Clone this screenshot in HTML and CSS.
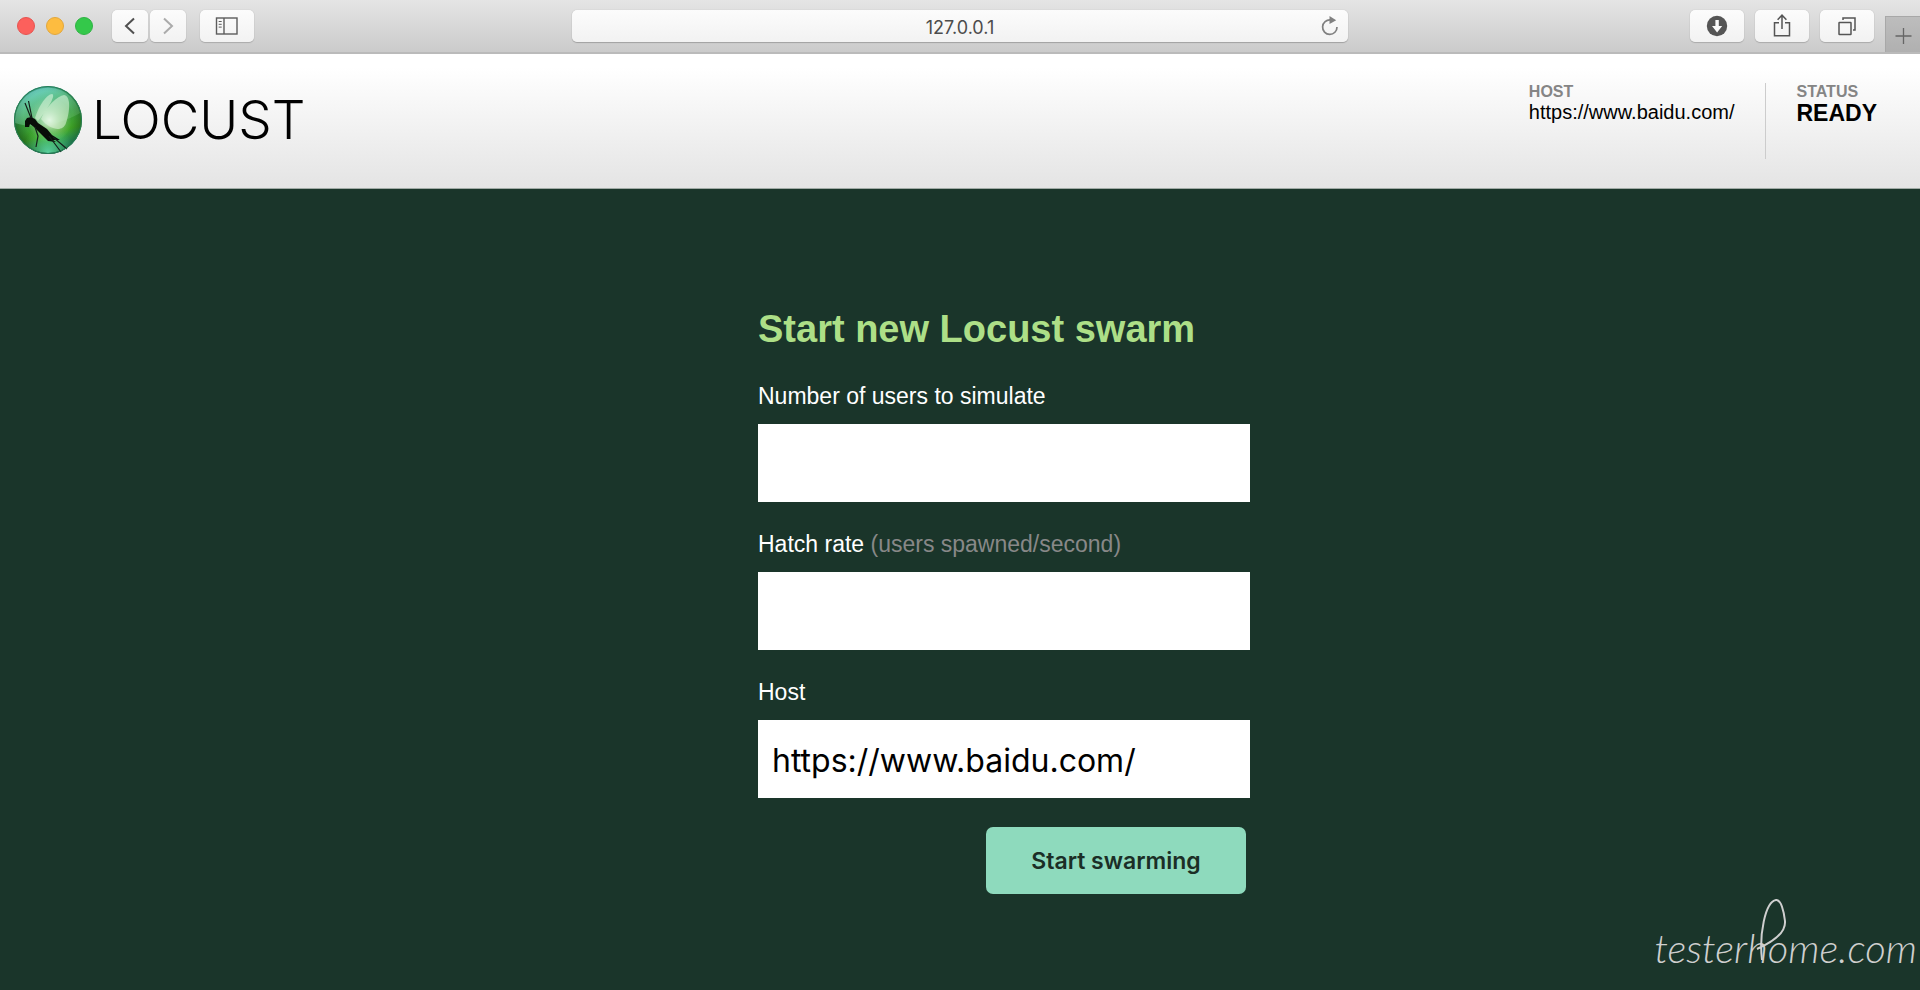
FILE: index.html
```html
<!DOCTYPE html>
<html lang="en">
<head>
<meta charset="utf-8">
<title>Locust</title>
<link rel="stylesheet" href="styles.css">
</head>
<body>
<div class="toolbar">
  <div class="tools-left">
    <div class="lights">
      <button class="light red" aria-label="Close"></button>
      <button class="light amber" aria-label="Minimise"></button>
      <button class="light green" aria-label="Full screen"></button>
    </div>
    <div class="history">
      <button class="tool narrow" aria-label="Back"><svg width="36" height="32" viewBox="0 0 36 32"><path d="M22 8.500 14 16l8 7.500" fill="none" stroke="#505050" stroke-width="2"/></svg></button>
      <button class="tool narrow" aria-label="Forward"><svg width="36" height="32" viewBox="0 0 36 32"><path d="M14 8.500 22 16l-8 7.500" fill="none" stroke="#ababab" stroke-width="2"/></svg></button>
    </div>
    <button class="tool" aria-label="Sidebar"><svg width="54" height="32" viewBox="0 0 54 32" fill="none" stroke="#5c5c5c"><rect x="16.500" y="8" width="20.500" height="16" stroke-width="1.400"/><path d="M24 8v16" stroke-width="1.400"/><path d="M18.700 11.500h3M18.700 14.300h3M18.700 17.100h3" stroke-width="1"/></svg></button>
  </div>
  <div class="address">
    <input class="url" type="text" value="127.0.0.1" aria-label="Address">
    <button class="reload" aria-label="Reload"><svg width="20" height="22" viewBox="0 0 20 22"><path d="M10.500 4A7.200 7.200 0 1 0 17 11" fill="none" stroke="#808080" stroke-width="1.700"/><path d="M9.500 0v8L16.200 4.200z" fill="#808080"/></svg></button>
  </div>
  <div class="tools-right">
    <button class="tool" aria-label="Downloads"><svg width="54" height="32" viewBox="0 0 54 32"><circle cx="27" cy="16" r="10.200" fill="#555"/><path d="M25.400 10h3.400v6h3.400l-5.100 6.500-5.100-6.500h3.400z" fill="#fafafa"/></svg></button>
    <button class="tool" aria-label="Share"><svg width="54" height="32" viewBox="0 0 54 32" fill="none" stroke="#555" stroke-width="1.500"><path d="M24 12.700h-4.500v13h15v-13H30M27 19V5.500M22.600 9.800 27 5.200l4.400 4.600"/></svg></button>
    <button class="tool" aria-label="Tabs"><svg width="54" height="32" viewBox="0 0 54 32" fill="none" stroke="#555" stroke-width="1.500"><rect x="19" y="12.500" width="12" height="12" rx=".5"/><path d="M23 10V8h12v12h-2"/></svg></button>
    <button class="new-tab" aria-label="New tab"><svg width="34" height="35" viewBox="0 0 34 35"><path d="M17.500 11v16M9.500 19h16" stroke="#666" stroke-width="1.300"/></svg></button>
  </div>
</div>

<header class="header">
  <a class="brand" href="#">
    <svg class="emblem" width="70" height="70" viewBox="0 0 70 70" aria-hidden="true">
      <defs>
        <linearGradient id="ball" x1="0" y1="0" x2=".3" y2="1"><stop offset="0" stop-color="#55c6d4"/><stop offset=".3" stop-color="#45b071"/><stop offset=".55" stop-color="#35973c"/><stop offset=".8" stop-color="#3fa325"/><stop offset="1" stop-color="#30a877"/></linearGradient>
        <radialGradient id="shade" cx=".5" cy=".44" r=".56"><stop offset=".65" stop-color="#042b10" stop-opacity="0"/><stop offset=".95" stop-color="#042b10" stop-opacity=".45"/><stop offset="1" stop-color="#03200c" stop-opacity=".7"/></radialGradient>
        <radialGradient id="glow" cx=".52" cy=".5" r=".34"><stop offset="0" stop-color="#fff" stop-opacity=".95"/><stop offset=".45" stop-color="#d4f0cd" stop-opacity=".5"/><stop offset="1" stop-color="#b8e5ae" stop-opacity="0"/></radialGradient>
        <linearGradient id="gloss" x1="0" y1="0" x2="1" y2="1"><stop offset="0" stop-color="#8ae8ee" stop-opacity=".5"/><stop offset="1" stop-color="#a4e3a2" stop-opacity=".12"/></linearGradient>
        <radialGradient id="base" cx=".5" cy="1" r=".4"><stop offset="0" stop-color="#67e3af" stop-opacity=".85"/><stop offset="1" stop-color="#59cf71" stop-opacity="0"/></radialGradient>
      </defs>
      <circle cx="35" cy="35" r="34" fill="url(#ball)"/>
      <circle cx="35" cy="35" r="34" fill="url(#shade)"/>
      <circle cx="35" cy="35" r="33" fill="url(#glow)"/>
      <circle cx="35" cy="35" r="33" fill="url(#base)"/>
      <path d="M2 38A33 33 0 0 1 67 28C54 36 25 46 2 38z" fill="url(#gloss)"/>
      <path d="M22 33C26 20 34 9 39 9c4 1-3 13-14 27z" fill="#e4f7e0" fill-opacity=".55"/>
      <path d="M28 34C33 21 45 11 51 10c6 0 7 14 2 28-3 9-15 8-25-4z" fill="#e4f7e0" fill-opacity=".55"/>
      <path d="M12 42v-6l2-3 4-1 4 2 3 4 9 6 5 6 8 5-7 0 3 2-8-1-8-8-6-6-4-3-1 3z" fill="#080d08"/>
      <path d="M18 33 12 18M19 33 15.500 16M22 42l3 9-2 11M36 51l12 16M40 52l14 12" fill="none" stroke="#141f1a" stroke-width="1.200"/>
      <circle cx="35" cy="35" r="33.500" fill="none" stroke="#277d58" stroke-width="1"/>
    </svg>
    <span class="wordmark">LOCUST</span>
  </a>
  <dl class="stats">
    <div class="stat"><dt>HOST</dt><dd>https://www.baidu.com/</dd></div>
    <div class="stat status"><dt>STATUS</dt><dd>READY</dd></div>
  </dl>
</header>

<main class="main">
  <form class="swarm">
    <h1>Start new Locust swarm</h1>
    <label for="users">Number of users to simulate</label>
    <input class="field" id="users" type="text">
    <label for="rate">Hatch rate <span class="hint">(users spawned/second)</span></label>
    <input class="field" id="rate" type="text">
    <label for="host">Host</label>
    <input class="field" id="host" type="text" value="https://www.baidu.com/">
    <button class="start" type="button">Start swarming</button>
  </form>
  <div class="signature">
    <svg class="swash" width="34" height="68" viewBox="0 0 34 68" aria-hidden="true"><path d="M6 62C3 37 9 4 20 2c5-1 8 12 9 21C30 35 17 44 1 51" fill="none" stroke="#cfcfcf" stroke-width="2"/></svg>
    <span>testerhome.com</span>
  </div>
</main>
</body>
</html>
```
FILE: styles.css
```css
* { box-sizing: border-box; }
body {
  margin: 0;
  min-height: 100vh;
  display: flex;
  flex-direction: column;
  font-family: "Liberation Sans", Arial, sans-serif;
  background: #1a352a;
}
button { border: 0; padding: 0; background: none; }
svg { display: block; }

.toolbar {
  display: grid;
  grid-template-columns: 1fr 776px 1fr;
  align-items: center;
  height: 54px;
  border-bottom: 2px solid #bababa;
  background: linear-gradient(#e5e5e5, #cbcbcb);
}
.tools-left { display: flex; align-items: center; padding-left: 17px; }
.lights { display: flex; gap: 11px; margin-right: 19px; }
.light { width: 18px; height: 18px; border-radius: 50%; }
.red { background: #fc605c; border: 1px solid #e65450; }
.amber { background: #fdbc40; border: 1px solid #e2a73c; }
.green { background: #34c84a; border: 1px solid #2fb344; }
.history { display: flex; gap: 2px; margin-right: 14px; }
.tool {
  width: 54px;
  height: 32px;
  border-radius: 5px;
  background: linear-gradient(#fcfcfc, #f2f2f2);
  box-shadow: 0 0 1px 0 #aaa, 0 1px 1px #aaa;
}
.narrow { width: 36px; }
.address { position: relative; }
.url {
  display: block;
  width: 100%;
  height: 32px;
  padding: 2px 48px 0;
  border: 0;
  border-radius: 5px;
  background: linear-gradient(#fcfcfc, #f2f2f2);
  box-shadow: 0 0 1px 0 #aaa, 0 1px 1px #a0a0a0;
  color: #4c4c4c;
  font: 18px/30px Inter, sans-serif;
  text-align: center;
}
.reload { position: absolute; right: 8px; top: 6px; }
.tools-right { display: flex; justify-content: flex-end; align-items: center; gap: 11px; height: 52px; }
.new-tab {
  align-self: flex-end;
  width: 35px;
  height: 36px;
  border-left: 1px solid #a8a8a8;
  border-top: 1px solid #a8a8a8;
  background: linear-gradient(#bdbdbd, #b0b0b0);
}

.header {
  display: flex;
  justify-content: space-between;
  align-items: flex-start;
  height: 135px;
  padding: 29px 43px 0 13px;
  border-bottom: 1px solid #a0aaa5;
  background: linear-gradient(#fff 10%, #e4e4e4);
}
.brand { display: flex; align-items: center; gap: 9px; padding-top: 2px; color: #000; text-decoration: none; }
.wordmark { font: 300 53px/70px Inter, sans-serif; }
.stats { display: flex; margin: 0; }
.stat { height: 76px; padding-right: 31px; }
.stat dt { color: #858585; font-weight: bold; font-size: 16px; line-height: 18px; }
.stat dd { margin: 0; color: #000; font-size: 20px; line-height: 22px; }
.status { padding: 0 0 0 30px; border-left: 1px solid #ccc; }
.status dd { font-weight: bold; font-size: 23px; line-height: 24px; }

.main { position: relative; flex: 1; padding-top: 118px; }
.swarm {
  display: flex;
  flex-direction: column;
  width: 580px;
  margin: 0 auto;
  padding-left: 88px;
  color: #fff;
}
h1 { margin: 0 0 31px; color: #addf87; font-size: 38px; line-height: 44px; }
.swarm label { margin-bottom: 14px; font-size: 23px; line-height: 28px; }
.hint { color: #888; }
.field {
  width: 100%;
  height: 78px;
  margin-bottom: 28px;
  padding: 2px 14px 0;
  border: 0;
  background: #fff;
  color: #000;
  font: 32px Inter, sans-serif;
}
.start {
  align-self: flex-end;
  width: 260px;
  height: 67px;
  margin: 1px 4px 0 0;
  border-radius: 7px;
  background: #8edabd;
  color: #1b2e26;
  font: 600 23px Inter, sans-serif;
}
.signature {
  position: absolute;
  right: 3px;
  bottom: 20px;
  color: #cfcfcf;
  font: italic 300 40px/44px Lato, sans-serif;
}
.swash { position: absolute; left: 102px; bottom: 4px; }
```
